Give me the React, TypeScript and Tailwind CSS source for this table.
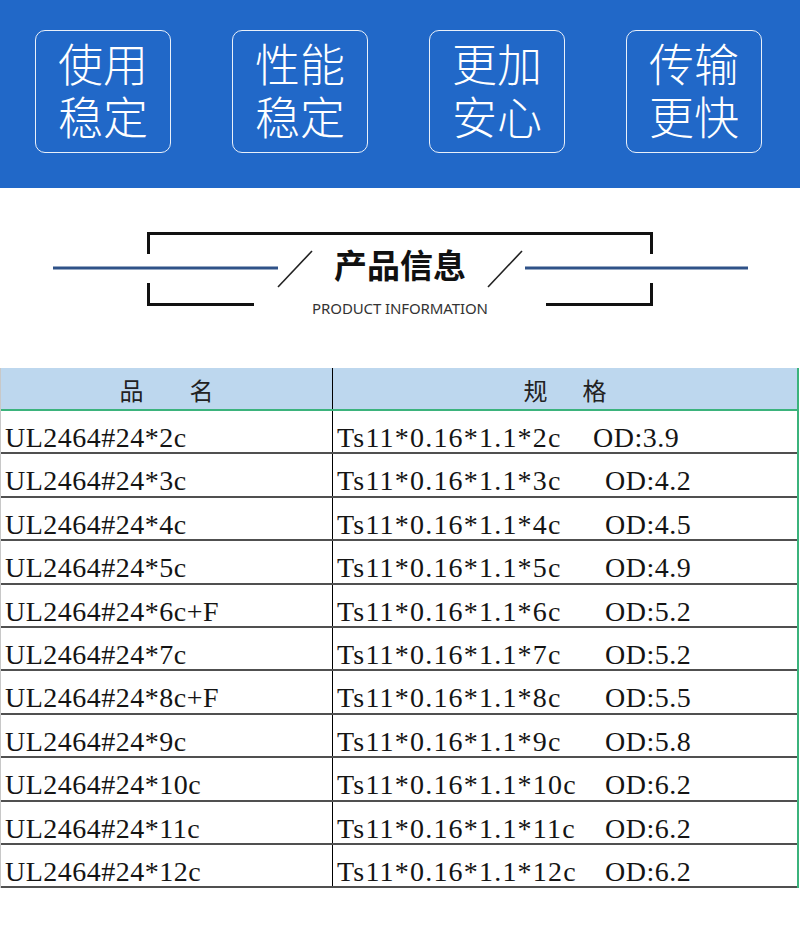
const features = [
  ["使用", "稳定"],
  ["性能", "稳定"],
  ["更加", "安心"],
  ["传输", "更快"],
];

const rows = [
  { name: "UL2464#24*2c", spec: "Ts11*0.16*1.1*2c", od: "OD:3.9", first: true },
  { name: "UL2464#24*3c", spec: "Ts11*0.16*1.1*3c", od: "OD:4.2" },
  { name: "UL2464#24*4c", spec: "Ts11*0.16*1.1*4c", od: "OD:4.5" },
  { name: "UL2464#24*5c", spec: "Ts11*0.16*1.1*5c", od: "OD:4.9" },
  { name: "UL2464#24*6c+F", spec: "Ts11*0.16*1.1*6c", od: "OD:5.2" },
  { name: "UL2464#24*7c", spec: "Ts11*0.16*1.1*7c", od: "OD:5.2" },
  { name: "UL2464#24*8c+F", spec: "Ts11*0.16*1.1*8c", od: "OD:5.5" },
  { name: "UL2464#24*9c", spec: "Ts11*0.16*1.1*9c", od: "OD:5.8" },
  { name: "UL2464#24*10c", spec: "Ts11*0.16*1.1*10c", od: "OD:6.2" },
  { name: "UL2464#24*11c", spec: "Ts11*0.16*1.1*11c", od: "OD:6.2" },
  { name: "UL2464#24*12c", spec: "Ts11*0.16*1.1*12c", od: "OD:6.2" },
];

const cjk = { fontFamily: '"Noto Sans CJK SC", "Noto Sans", sans-serif' };
const cell = { fontFamily: '"Liberation Serif", "Noto Sans CJK SC", serif' };

function TitleDecor() {
  return (
    <svg className="absolute inset-0" width="800" height="180" viewBox="0 0 800 180">
      <line x1="53" y1="80" x2="278" y2="80" stroke="#2f5288" strokeWidth="3" />
      <line x1="525" y1="80" x2="748" y2="80" stroke="#2f5288" strokeWidth="3" />
      <path d="M148.5 66 V45.5 H651.5 V66" fill="none" stroke="#111" strokeWidth="3" />
      <path d="M148.5 95 V116.5 H254" fill="none" stroke="#111" strokeWidth="3" />
      <path d="M546 116.5 H651.5 V95" fill="none" stroke="#111" strokeWidth="3" />
      <line x1="278" y1="99" x2="312" y2="63" stroke="#222" strokeWidth="1.6" />
      <line x1="488" y1="99" x2="522" y2="63" stroke="#222" strokeWidth="1.6" />
    </svg>
  );
}

export default function App() {
  return (
    <div className="w-[800px] h-[926px] bg-white overflow-hidden">
      {/* feature band */}
      <div className="h-[188px] bg-[#2168c8] flex justify-between items-start pl-[35px] pr-[38px] pt-[30px]">
        {features.map((f, i) => (
          <div
            key={i}
            className="w-[136px] h-[123px] rounded-[10px] border border-white/90 flex items-center justify-center pb-[6px] text-white text-[45px] font-light leading-[53px] text-center"
            style={cjk}
          >
            <p>
              {f[0]}
              <br />
              {f[1]}
            </p>
          </div>
        ))}
      </div>

      {/* section title */}
      <div className="relative h-[180px]">
        <TitleDecor />
        <div className="relative flex flex-col items-center pt-[56px]">
          <div className="text-[33px] leading-[40px] font-bold text-[#111]" style={cjk}>
            产品信息
          </div>
          <div
            className="mt-[14px] text-[15px] leading-[20px] text-[#333] tracking-[-0.1px]"
            style={{ fontFamily: '"Noto Sans", sans-serif' }}
          >
            PRODUCT INFORMATION
          </div>
        </div>
      </div>

      {/* table */}
      <div className="w-[799px] border-l border-[#c8c8c8] border-r-2 border-r-[#3bb37c]">
        <div className="flex h-[43px] bg-[#bdd7ee] border-b-2 border-[#3bb37c] text-[24px] text-[#222]" style={cjk}>
          <div className="w-[332px] border-r border-black flex items-end justify-center gap-[46px] pb-[1px]">
            <span>品</span>
            <span>名</span>
          </div>
          <div className="flex-1 flex items-end justify-center gap-[35px] pb-[1px]">
            <span>规</span>
            <span>格</span>
          </div>
        </div>
        {rows.map((r) => (
          <div
            key={r.name}
            className="flex h-[43.4px] border-b-2 border-[#505050] text-[28px] leading-[28px] text-[#141414]"
            style={cell}
          >
            <div className="w-[332px] border-r border-black pl-[4px] pt-[13px] whitespace-nowrap tracking-[0.5px]">
              {r.name}
            </div>
            <div className="flex-1 pl-[4px] pt-[13px] flex whitespace-nowrap">
              <span className={r.first ? "w-[256px] tracking-[1.2px]" : "w-[268px] tracking-[1.2px]"}>{r.spec}</span>
              <span className="tracking-[0.5px]">{r.od}</span>
            </div>
          </div>
        ))}
      </div>
    </div>
  );
}
